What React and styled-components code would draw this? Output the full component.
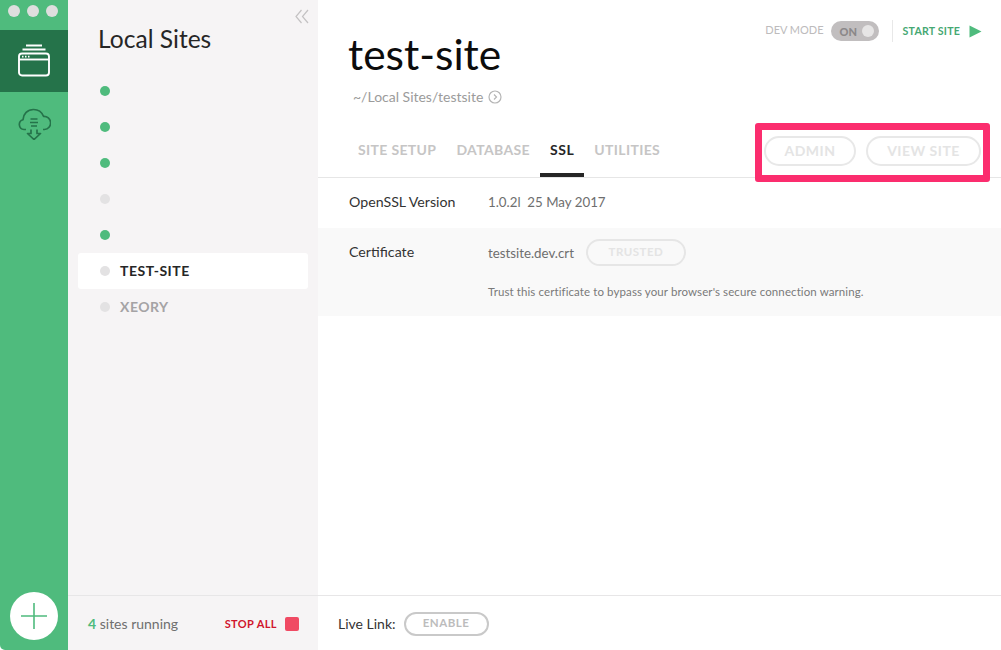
import React from 'react';
import styled, { createGlobalStyle } from 'styled-components';

const GlobalStyle = createGlobalStyle`
  html, body {
    margin: 0;
    padding: 0;
    height: 100%;
    background: #fff;
  }
  #root {
    height: 100%;
  }
  * {
    box-sizing: border-box;
  }
`;

const AppWindow = styled.div`
  display: flex;
  width: 1001px;
  height: 650px;
  overflow: hidden;
  position: relative;
  font-family: Lato, "Noto Sans", sans-serif;
  color: #262626;
`;

const Rail = styled.nav`
  width: 68px;
  flex: none;
  display: flex;
  flex-direction: column;
  background: #4fbb7d;
  border-bottom-left-radius: 5px;
`;

const TrafficLights = styled.div`
  height: 30px;
  display: flex;
  gap: 7px;
  padding: 5px 0 0 8px;
`;

const TrafficLight = styled.span`
  width: 12px;
  height: 12px;
  border-radius: 50%;
  background: #dedede;
`;

const RailItem = styled.div`
  height: 62px;
  display: flex;
  align-items: center;
  justify-content: center;
  background: ${(p) => (p.$active ? '#25734a' : 'transparent')};
`;

const AddButton = styled.button`
  width: 48px;
  height: 48px;
  margin: auto 0 10px 10px;
  padding: 0;
  border: none;
  border-radius: 50%;
  background: #fff;
  display: flex;
  align-items: center;
  justify-content: center;
`;

const Sidebar = styled.aside`
  width: 250px;
  flex: none;
  display: flex;
  flex-direction: column;
  background: #f6f4f5;
  position: relative;
`;

const CollapseIcon = styled.svg`
  position: absolute;
  top: 9px;
  right: 9px;
`;

const SidebarTitle = styled.h1`
  margin: 0;
  padding: 24px 0 0 30px;
  height: 73px;
  font-size: 24.6px;
  line-height: 30px;
  font-weight: 400;
  color: #262626;
`;

const SiteList = styled.ul`
  list-style: none;
  margin: 0;
  padding: 0 10px;
  flex: 1;
`;

const SiteRow = styled.li`
  height: 36px;
  display: flex;
  align-items: center;
  gap: 10px;
  padding-left: 22px;
  border-radius: 3px;
  background: ${(p) => (p.$selected ? '#fff' : 'transparent')};
`;

const StatusDot = styled.span`
  width: 10px;
  height: 10px;
  flex: none;
  border-radius: 50%;
  background: ${(p) => (p.$running ? '#4fbb7d' : '#e3e2e3')};
`;

const SiteName = styled.span`
  font-size: 14px;
  font-weight: 700;
  letter-spacing: 0.5px;
  margin-top: -2px;
  color: ${(p) => (p.$selected ? '#262626' : '#a5a3a5')};
`;

const SidebarFooter = styled.div`
  height: 55px;
  flex: none;
  display: flex;
  align-items: center;
  justify-content: space-between;
  padding: 1px 19px 0 20px;
  border-top: 1px solid #e7e6e7;
`;

const RunningCount = styled.span`
  font-size: 14px;
  color: #6f6f6f;

  b {
    color: #4fbb7d;
    font-weight: 700;
  }
`;

const StopAll = styled.span`
  display: flex;
  align-items: center;
  gap: 8px;
  font-size: 11px;
  font-weight: 700;
  letter-spacing: 0.4px;
  color: #d0142c;
`;

const StopSquare = styled.span`
  width: 14px;
  height: 14px;
  border-radius: 2px;
  background: #f04a63;
`;

const Main = styled.main`
  flex: 1;
  min-width: 0;
  display: flex;
  flex-direction: column;
  background: #fff;
`;

const Header = styled.header`
  height: 123px;
  flex: none;
  display: flex;
  justify-content: space-between;
  padding: 0 19px 0 30px;
`;

const SiteTitle = styled.h2`
  margin: 31px 0 0;
  font-size: 42.5px;
  line-height: 46px;
  font-weight: 400;
  color: #0c0c0c;
`;

const PathLine = styled.div`
  display: flex;
  align-items: center;
  gap: 5px;
  margin: 11px 0 0 5px;
  font-size: 14px;
  color: #9b9b9b;
`;

const DevControls = styled.div`
  display: flex;
  align-items: center;
  height: 22px;
  margin-top: 20px;
`;

const DevLabel = styled.span`
  font-size: 11px;
  margin: -3px 7px 0 0;
  color: #bdbbbc;
`;

const Toggle = styled.span`
  width: 48px;
  height: 20px;
  border-radius: 10px;
  background: #c1bebf;
  display: flex;
  align-items: center;
  justify-content: space-between;
  padding: 0 5px 0 9px;
  font-size: 11px;
  font-weight: 900;
  color: #8b8889;
`;

const ToggleKnob = styled.span`
  width: 12px;
  height: 12px;
  border-radius: 50%;
  background: #e6e5e5;
`;

const StartSite = styled.span`
  display: flex;
  align-items: center;
  gap: 9px;
  margin-left: 13px;
  padding-left: 10px;
  height: 22px;
  border-left: 1px solid #e8e8e8;
  font-size: 10.6px;
  font-weight: 700;
  letter-spacing: 0.2px;
  color: #46a873;
`;

const TabBar = styled.div`
  height: 55px;
  flex: none;
  display: flex;
  justify-content: space-between;
  padding: 0 20px 0 40px;
  border-bottom: 1px solid #e6e6e6;
`;

const Tabs = styled.div`
  display: flex;
  gap: 20px;
`;

const Tab = styled.span`
  height: 54px;
  padding: 18px ${(p) => (p.$active ? '10px' : '0')} 0;
  margin: 0 ${(p) => (p.$active ? '-10px' : '0')};
  font-size: 14px;
  line-height: 18px;
  font-weight: 700;
  letter-spacing: ${(p) => (p.$active ? '0.6px' : '0.35px')};
  color: ${(p) => (p.$active ? '#262626' : '#c6c5c5')};
  border-bottom: ${(p) => (p.$active ? '4px solid #262626' : 'none')};
`;

const TabActions = styled.div`
  display: flex;
  gap: 10px;
  padding-top: 13px;
`;

const PillButton = styled.button`
  height: ${(p) => p.$height || 30}px;
  width: ${(p) => p.$width}px;
  padding: 0 0 2px;
  background: transparent;
  border: 2px solid ${(p) => p.$border || '#e8e8e8'};
  border-radius: 15px;
  font-family: inherit;
  font-size: ${(p) => p.$size || 14}px;
  font-weight: 700;
  letter-spacing: 0.5px;
  color: ${(p) => p.$color || '#e4e4e4'};
`;

const Highlight = styled.div`
  position: absolute;
  left: 755px;
  top: 123px;
  width: 235px;
  height: 59px;
  border: 7px solid #fb2d6e;
  border-radius: 3px;
  pointer-events: none;
`;

const InfoRow = styled.div`
  display: flex;
  padding: ${(p) => (p.$shaded ? '11px' : '14px')} 31px 0;
  height: ${(p) => p.$height}px;
  flex: none;
  background: ${(p) => (p.$shaded ? '#f9f9f9' : '#fff')};
`;

const InfoLabel = styled.div`
  width: 139px;
  flex: none;
  font-size: 14.2px;
  line-height: 20px;
  color: #333;
  padding-top: ${(p) => (p.$shaded ? '3px' : '0')};
`;

const InfoValue = styled.div`
  font-size: 13.3px;
  line-height: 20px;
  color: #6e6e6e;
`;

const CertLine = styled.div`
  display: flex;
  align-items: center;
  gap: 12px;
`;

const Hint = styled.p`
  margin: 18px 0 0;
  font-size: 11.5px;
  line-height: 16px;
  color: #7a7a7a;
  letter-spacing: 0.1px;
`;

const Spacer = styled.div`
  flex: 1;
`;

const LiveLinkBar = styled.div`
  height: 55px;
  flex: none;
  display: flex;
  align-items: center;
  gap: 8px;
  padding: 1px 0 0 20px;
  border-top: 1px solid #e7e6e7;
  font-size: 14px;
  color: #333;
`;

const WindowsIcon = () => (
  <svg width="34" height="34" viewBox="0 0 34 34" fill="none" stroke="#fff" strokeWidth="1.9">
    <path d="M9 1.5h16M5.5 5.5h23" />
    <rect x="2" y="9.5" width="30" height="22" rx="3" />
    <path d="M2 15.5h30" />
    <path d="M5 12.6h1.5M8 12.6h1.5M11 12.6h1.5" />
  </svg>
);

const CloudIcon = () => (
  <svg width="34" height="34" viewBox="0 0 34 34" fill="none" stroke="#25734a" strokeWidth="1.7" strokeLinejoin="round">
    <path d="M9 23.5H7a5 5 0 0 1-1-9.8C6.3 8 10.5 3.5 16.5 3.5c5 0 8.5 3 10 6.8a6.6 6.6 0 0 1 1 13.2H26" />
    <path d="M13.5 13h7M13 16.5h8M14 20h6" />
    <path d="M14 23.5v4h-3.5l6.5 6 6.5-6H20v-4" />
  </svg>
);

const PlusIcon = () => (
  <svg width="26" height="26" viewBox="0 0 26 26" fill="none" stroke="#4fbb7d" strokeWidth="1.6">
    <path d="M13 0v26M0 13h26" />
  </svg>
);

const sites = [
  { id: 1, running: true },
  { id: 2, running: true },
  { id: 3, running: true },
  { id: 4, running: false },
  { id: 5, running: true },
  { id: 6, running: false, name: 'TEST-SITE', selected: true },
  { id: 7, running: false, name: 'XEORY' },
];

function App() {
  return (
    <AppWindow>
      <GlobalStyle />
      <Rail>
        <TrafficLights>
          <TrafficLight />
          <TrafficLight />
          <TrafficLight />
        </TrafficLights>
        <RailItem $active>
          <WindowsIcon />
        </RailItem>
        <RailItem>
          <CloudIcon />
        </RailItem>
        <AddButton>
          <PlusIcon />
        </AddButton>
      </Rail>

      <Sidebar>
        <CollapseIcon width="14" height="15" viewBox="0 0 14 15" fill="none" stroke="#c4c2c3" strokeWidth="1.2">
          <path d="M6.5 1L1 7.5 6.5 14M13 1L7.5 7.5 13 14" />
        </CollapseIcon>
        <SidebarTitle>Local Sites</SidebarTitle>
        <SiteList>
          {sites.map((site) => (
            <SiteRow key={site.id} $selected={site.selected}>
              <StatusDot $running={site.running} />
              {site.name && <SiteName $selected={site.selected}>{site.name}</SiteName>}
            </SiteRow>
          ))}
        </SiteList>
        <SidebarFooter>
          <RunningCount>
            <b>4</b> sites running
          </RunningCount>
          <StopAll>
            STOP ALL
            <StopSquare />
          </StopAll>
        </SidebarFooter>
      </Sidebar>

      <Main>
        <Header>
          <div>
            <SiteTitle>test-site</SiteTitle>
            <PathLine>
              ~/Local Sites/testsite
              <svg width="14" height="14" viewBox="0 0 14 14" fill="none" stroke="#b5b5b5" strokeWidth="1.2">
                <circle cx="7" cy="7" r="6" />
                <path d="M6 4.5L8.5 7 6 9.5" />
              </svg>
            </PathLine>
          </div>
          <DevControls>
            <DevLabel>DEV MODE</DevLabel>
            <Toggle>
              ON
              <ToggleKnob />
            </Toggle>
            <StartSite>
              START SITE
              <svg width="13" height="13" viewBox="0 0 13 13" fill="#4fbb7d">
                <path d="M0.5 0.5L12.5 6.5 0.5 12.5z" />
              </svg>
            </StartSite>
          </DevControls>
        </Header>

        <TabBar>
          <Tabs>
            <Tab>SITE SETUP</Tab>
            <Tab>DATABASE</Tab>
            <Tab $active>SSL</Tab>
            <Tab>UTILITIES</Tab>
          </Tabs>
          <TabActions>
            <PillButton $width={92}>ADMIN</PillButton>
            <PillButton $width={115}>VIEW SITE</PillButton>
          </TabActions>
        </TabBar>

        <InfoRow $height={50}>
          <InfoLabel>OpenSSL Version</InfoLabel>
          <InfoValue>1.0.2l&nbsp; 25 May 2017</InfoValue>
        </InfoRow>
        <InfoRow $shaded $height={88}>
          <InfoLabel $shaded>Certificate</InfoLabel>
          <InfoValue>
            <CertLine>
              testsite.dev.crt
              <PillButton $width={100} $height={27} $size={11.5} $border="#e6e6e6">TRUSTED</PillButton>
            </CertLine>
            <Hint>Trust this certificate to bypass your browser's secure connection warning.</Hint>
          </InfoValue>
        </InfoRow>

        <Spacer />

        <LiveLinkBar>
          Live Link:
          <PillButton $width={85} $height={24} $size={11.5} $border="#c9c9c9" $color="#bcbcbc">ENABLE</PillButton>
        </LiveLinkBar>
      </Main>

      <Highlight />
    </AppWindow>
  );
}

export default App;
